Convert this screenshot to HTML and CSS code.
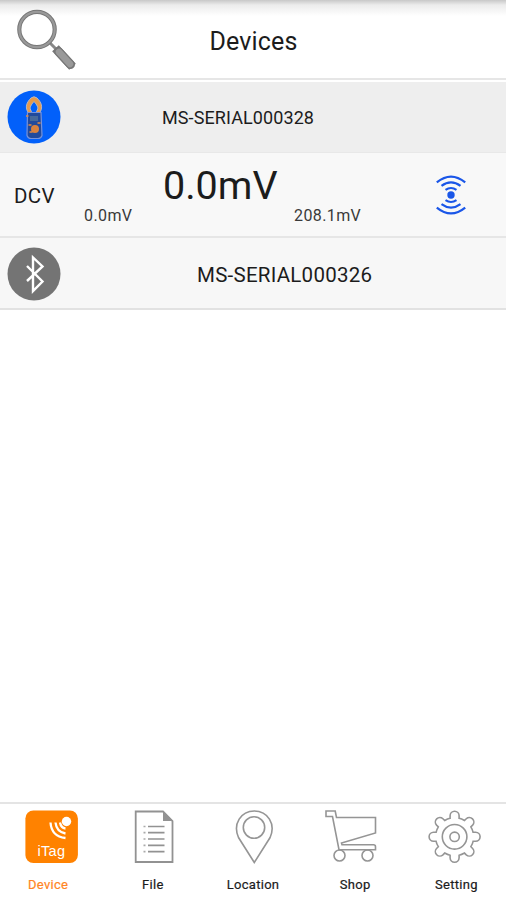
FILE: index.html
```html
<!DOCTYPE html>
<html lang="en">
<head>
  <meta charset="UTF-8">
  <title>Devices</title>
  <link rel="stylesheet" href="styles.css">
</head>
<body>
  <header class="topbar">
    <svg class="search" width="64" height="64" viewBox="0 0 64 64">
      <path d="M34 35l8 8" stroke="#888" stroke-width="3"/>
      <path d="M43.500 44.500l11 12" stroke="#777" stroke-width="9" stroke-linecap="square" stroke-linejoin="round"/>
      <path d="M43.500 44.500l12 13" stroke="#777" stroke-width="9" stroke-linecap="round"/>
      <path d="M44 45l11 12" stroke="#999" stroke-width="6.500" stroke-linecap="round"/>
      <circle cx="22" cy="22.500" r="17.700" fill="none" stroke="#777" stroke-width="4.200"/>
      <circle cx="22" cy="22.500" r="17.700" fill="none" stroke="#999" stroke-width="2.200"/>
    </svg>
    <h1>Devices</h1>
  </header>

  <main>
    <section class="row active">
      <svg class="badge" width="54" height="54" viewBox="0 0 54 54">
        <circle cx="27" cy="27" r="26.500" fill="#0260fa"/>
        <path d="M22 24c-5-7-2-12 2-16q3-2.500 6 0c4 4 7 9 2 16l-2.500-2.500c3-4 0-7-2.500-10c-2.500 3-5.500 6-2.500 10z" fill="#e79a4b" stroke="#b4b7c6" stroke-width="1"/>
        <path d="M20.500 22.500h13.500l1 23q-1 3-4 3h-7q-3 0-4-3z" fill="#214a9c" stroke="#7893d9" stroke-width="1.200"/>
        <path d="M23 26h8v5h-8z" fill="#46699a"/>
        <circle cx="28" cy="39" r="4" fill="#d9823e"/>
        <path d="M19 26h2.500m0 9h3m-2 7h3m5-9h3" stroke="#e38a42" stroke-width="1.500"/>
      </svg>
      <span class="serial small">MS-SERIAL000328</span>
    </section>

    <section class="reading">
      <span class="mode">DCV</span>
      <div class="values">
        <div class="value">0.0mV</div>
        <div class="range"><span class="min">0.0mV</span><span class="max">208.1mV</span></div>
      </div>
      <svg class="signal" width="32" height="42" viewBox="-16 -21 32 42" fill="none" stroke="#1a56e8" stroke-width="2.200">
        <circle r="3.700" fill="#1a56e8" stroke="none"/>
        <path d="M-5.500-5.200q5.500-3.600 11 0M-9.500-9.200q9.500-7 19 0M-14.200-12.600q14.200-11.600 28.400 0"/>
        <path d="M-5.500 5.200q5.500 3.600 11 0M-9.500 9.200q9.500 7 19 0M-14.200 12.600q14.200 11.600 28.400 0"/>
      </svg>
    </section>

    <section class="row">
      <svg class="badge" width="54" height="54" viewBox="0 0 54 54">
        <circle cx="27" cy="27" r="26.500" fill="#747474"/>
        <path d="M20 19l15.500 15.500-9.500 9.500V10.500l9.500 9L20 34" fill="none" stroke="#fff" stroke-width="2.400"/>
      </svg>
      <span class="serial large">MS-SERIAL000326</span>
    </section>
  </main>

  <nav class="tabs">
    <a class="tab device">
      <svg width="80" height="60" viewBox="0 0 80 60">
        <rect x="14.400" y="6.500" width="52.500" height="52.500" rx="8" fill="#ff8200"/>
        <circle cx="55.500" cy="17.500" r="4.700" fill="#fff"/>
        <path d="M49 18.500q1 5.500 5.500 6M44.500 18.500q1 9.500 10 11M39.500 18.500q1 14 15 15.500" fill="none" stroke="#fff" stroke-width="2.300"/>
        <text x="40.400" y="52" class="tag">iTag</text>
      </svg>
      <span>Device</span>
    </a>
    <a class="tab file">
      <svg width="80" height="60" viewBox="0 0 80 60">
        <path d="M23.700 7.500H51l9.500 9.500v41H23.700z" fill="none" stroke="#929292" stroke-width="1.800"/>
        <path d="M51 7v10h10z" fill="#929292"/>
        <path d="M36 22.500h16.500M36 28.700h16.500M36 35h16.500M36 41.300h16.500M36 47.600h16.500" stroke="#929292" stroke-width="1.700"/>
        <path d="M31.500 22.500h2M31.500 28.700h2M31.500 35h2M31.500 41.300h2M31.500 47.600h2" stroke="#aaa" stroke-width="1.700"/>
      </svg>
      <span>File</span>
    </a>
    <a class="tab">
      <svg class="line" width="80" height="60" viewBox="0 0 80 60">
        <path d="M41.300 58.500L25.500 33.500C19.500 20 28 7 41.300 7s21.800 13 15.800 26.500z"/>
        <circle cx="41" cy="23.500" r="10.700"/>
      </svg>
      <span>Location</span>
    </a>
    <a class="tab shop">
      <svg class="line" width="80" height="60" viewBox="0 0 80 60">
        <path d="M12 7h9.200l1.300 6.500h39v15.500L27.500 39l.5 1.700h31.500q2 0 2 2v3H25L18.500 12.500H12z"/>
        <circle cx="25.500" cy="51.500" r="5.500"/>
        <circle cx="53.500" cy="51.500" r="5.500"/>
      </svg>
      <span>Shop</span>
    </a>
    <a class="tab setting">
      <svg class="line" width="80" height="60" viewBox="-39.600 -32.800 80 60">
        <path d="M-4.500-18.500V-21A4.500 4.500 0 0 1 4.500-21V-18.500Q7-18 9.900-16.260L11.670-18.030A4.500 4.500 0 0 1 18.030-11.670L16.260-9.900Q18-7 18.500-4.500H21A4.500 4.500 0 0 1 21 4.500H18.500Q18 7 16.260 9.900L18.030 11.670A4.500 4.500 0 0 1 11.670 18.030L9.900 16.260Q7 18 4.500 18.500V21A4.500 4.500 0 0 1-4.500 21V18.500Q-7 18-9.900 16.260L-11.670 18.030A4.500 4.500 0 0 1-18.030 11.670L-16.260 9.900Q-18 7-18.500 4.500H-21A4.500 4.500 0 0 1-21-4.500H-18.500Q-18-7-16.260-9.900L-18.030-11.670A4.500 4.500 0 0 1-11.670-18.030L-9.900-16.260Q-7-18-4.500-18.500Z"/>
        <circle r="12.300"/>
        <circle r="4.700"/>
      </svg>
      <span>Setting</span>
    </a>
  </nav>
</body>
</html>
```
FILE: styles.css
```css
* {
  box-sizing: border-box;
}
body {
  margin: 0;
  height: 900px;
  display: flex;
  flex-direction: column;
  background: #fff;
  color: #1c1c1c;
  font-family: Roboto, sans-serif;
}
main {
  flex: 1;
}
.topbar {
  height: 80px;
  margin-bottom: 2px;
  display: grid;
  grid-template-columns: 80px 1fr 80px;
  align-items: center;
  border-bottom: 2px solid #e6e6e6;
  background: linear-gradient(#c8c8c8, #ececec 5px, #fff 16px);
}
.search {
  margin-left: 15px;
}
h1 {
  margin: 4px 0 0 1px;
  font-size: 25px;
  font-weight: 400;
  letter-spacing: 0.15px;
  text-align: center;
}
.row {
  height: 72px;
  display: flex;
  align-items: center;
  padding: 1px 0 0 7px;
  background: #f7f7f7;
  border-bottom: 2px solid #e2e2e2;
}
.row.active {
  height: 71px;
  padding-top: 0;
  background: #eee;
  border-bottom: 1px solid #e8e8e8;
}
.small {
  margin-left: 101px;
  font-size: 18px;
  letter-spacing: 0.1px;
}
.large {
  margin: 3px 0 0 136px;
  font-size: 20.500px;
  letter-spacing: 0.25px;
}
.reading {
  height: 85px;
  display: flex;
  align-items: center;
  background: #f8f8f8;
  border-bottom: 2px solid #e6e6e6;
}
.mode {
  width: 84px;
  padding: 3px 0 0 14px;
  font-size: 20.500px;
  letter-spacing: 0.3px;
}
.values {
  width: 351px;
}
.value {
  margin-left: 79px;
  font-size: 39.500px;
  line-height: 44px;
}
.range {
  display: flex;
  font-size: 16px;
  letter-spacing: 0.4px;
  line-height: 16px;
  padding-bottom: 2px;
  color: #3a3a3a;
}
.min {
  width: 210px;
}
.tabs {
  height: 98px;
  display: grid;
  grid-template-columns: repeat(5, 1fr);
  border-top: 2px solid #e4e4e4;
}
.tab {
  display: flex;
  flex-direction: column;
  align-items: center;
  font-size: 13px;
  letter-spacing: 0.3px;
  -webkit-text-stroke: 0.2px;
}
.tab span {
  margin-top: 13px;
  line-height: 16px;
}
.device {
  color: #ff8524;
}
.device span {
  margin-right: 5px;
}
.file span,
.shop span,
.setting span {
  margin-left: 2px;
}
.line {
  fill: none;
  stroke: #959595;
  stroke-width: 1.6;
}
.tag {
  fill: #fff;
  font-family: "Liberation Sans", sans-serif;
  font-size: 14.500px;
  text-anchor: middle;
}
```
